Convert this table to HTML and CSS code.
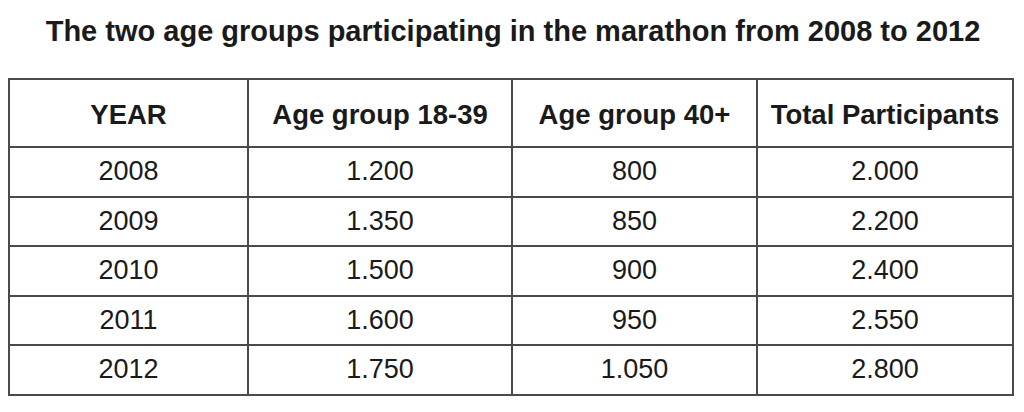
FILE: index.html
```html
<!DOCTYPE html>
<html>
<head>
<meta charset="utf-8">
<link rel="stylesheet" href="styles.css">
</head>
<body>
<div class="page">
  <h1 class="title">The two age groups participating in the marathon from 2008 to 2012</h1>
  <table class="data">
    <colgroup>
      <col class="c1"><col class="c2"><col class="c3"><col class="c4">
    </colgroup>
    <thead>
      <tr class="head"><th>YEAR</th><th>Age group 18-39</th><th>Age group 40+</th><th>Total Participants</th></tr>
    </thead>
    <tbody>
      <tr><td>2008</td><td>1.200</td><td>800</td><td>2.000</td></tr>
      <tr><td>2009</td><td>1.350</td><td>850</td><td>2.200</td></tr>
      <tr><td>2010</td><td>1.500</td><td>900</td><td>2.400</td></tr>
      <tr><td>2011</td><td>1.600</td><td>950</td><td>2.550</td></tr>
      <tr><td>2012</td><td>1.750</td><td>1.050</td><td>2.800</td></tr>
    </tbody>
  </table>
</div>
</body>
</html>
```
FILE: styles.css
```css
html, body {
  margin: 0;
  padding: 0;
  background: #ffffff;
}
.page {
  width: 1024px;
  height: 412px;
  padding: 0 12px 0 8px;
  box-sizing: border-box;
  font-family: "Liberation Sans", Arial, sans-serif;
  color: #1a1a1a;
}
.title {
  margin: 0;
  height: 78px;
  padding-top: 13px;
  padding-left: 6px;
  box-sizing: border-box;
  text-align: center;
  font-size: 29px;
  font-weight: bold;
  line-height: 36px;
  white-space: nowrap;
}
.data {
  border-collapse: collapse;
  width: 1004px;
  table-layout: fixed;
  border: 2px solid #4a4a4a;
}
.c1 { width: 239px; }
.c2 { width: 264px; }
.c3 { width: 245px; }
.c4 { width: 256px; }
.data th, .data td {
  border: 2px solid #4a4a4a;
  text-align: center;
  vertical-align: middle;
  padding: 0;
  white-space: nowrap;
}
.data th {
  height: 68px;
  padding-top: 4px;
  box-sizing: border-box;
  font-size: 27.5px;
  font-weight: bold;
}
.data td {
  height: 47.5px;
  font-size: 27px;
  font-weight: normal;
}
```
